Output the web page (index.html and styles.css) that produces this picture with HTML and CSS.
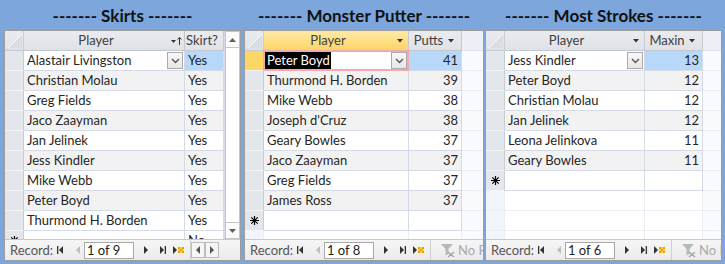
FILE: index.html
```html
<!DOCTYPE html>
<html lang="en">
<head>
    <meta charset="UTF-8">
    <title>Golf Day Stats</title>
    <link rel="stylesheet" href="styles.css">
</head>
<body>

<div class="form">

    <!-- Skirts -->
    <section class="panel skirts">
        <h2 class="title">------- Skirts -------</h2>
        <div class="sheet">
            <div class="sheet-body">
                <div class="rows">
                    <div class="row head">
                        <div class="cell sel corner"><svg width="18" height="19" viewBox="0 0 18 19"><path d="M3 17L17 3V17Z" fill="#dadee4"/><path d="M3 17L17 3" stroke="#f7f8fa" stroke-width="1"/></svg></div>
                        <div class="cell hcell"><span class="htext">Player</span><span class="hicon"><svg width="12" height="10" viewBox="0 0 12 10"><path d="M1 4h5L3.5 7z" fill="#333"/><path d="M9.5 9V1.5M7.5 3.5l2-2 2 2" stroke="#333" fill="none"/></svg></span></div>
                        <div class="cell hcell left"><span>Skirt?</span></div>
                    </div>
                    <div class="row">
                        <div class="cell sel"></div>
                        <div class="cell combo"><span class="name">Alastair Livingston</span><span class="drop"><svg width="9" height="6" viewBox="0 0 9 6"><path d="M1 1l3.5 3.5L8 1" stroke="#555" stroke-width="1.4" fill="none"/></svg></span></div>
                        <div class="cell picked">Yes</div>
                    </div>
                    <div class="row alt"><div class="cell sel"></div><div class="cell">Christian Molau</div><div class="cell">Yes</div></div>
                    <div class="row"><div class="cell sel"></div><div class="cell">Greg Fields</div><div class="cell">Yes</div></div>
                    <div class="row alt"><div class="cell sel"></div><div class="cell">Jaco Zaayman</div><div class="cell">Yes</div></div>
                    <div class="row"><div class="cell sel"></div><div class="cell">Jan Jelinek</div><div class="cell">Yes</div></div>
                    <div class="row alt"><div class="cell sel"></div><div class="cell">Jess Kindler</div><div class="cell">Yes</div></div>
                    <div class="row"><div class="cell sel"></div><div class="cell">Mike Webb</div><div class="cell">Yes</div></div>
                    <div class="row alt"><div class="cell sel"></div><div class="cell">Peter Boyd</div><div class="cell">Yes</div></div>
                    <div class="row"><div class="cell sel"></div><div class="cell">Thurmond H. Borden</div><div class="cell">Yes</div></div>
                    <div class="row"><div class="cell sel star"><svg width="9" height="9" viewBox="0 0 9 9"><path d="M4.5 0v9M0 4.5h9M1.3 1.3l6.4 6.4M7.7 1.3L1.3 7.7" stroke="#000" stroke-width="1.2"/></svg></div><div class="cell"></div><div class="cell">No</div></div>
                </div>
                <div class="vscroll">
                    <div class="sbtn"><svg width="7" height="4" viewBox="0 0 7 4"><path d="M0 4h7L3.5 0z" fill="#606060"/></svg></div>
                    <div class="thumb"></div>
                    <div class="sbtn"><svg width="7" height="4" viewBox="0 0 7 4"><path d="M0 0h7L3.5 4z" fill="#606060"/></svg></div>
                </div>
            </div>
            <div class="nav">
                <span class="nav-label">Record:</span>
                <svg class="nb first" width="6" height="8" viewBox="0 0 6 8"><rect width="1.3" height="8" fill="#333"/><path d="M6 0v8L2 4z" fill="#333"/></svg>
                <svg class="nb prev" width="4" height="8" viewBox="0 0 4 8"><path d="M4 0v8L0 4z" fill="#bdbdbd"/></svg>
                <span class="nav-box">1 of 9</span>
                <svg class="nb next" width="4" height="8" viewBox="0 0 4 8"><path d="M0 0v8l4-4z" fill="#333"/></svg>
                <svg class="nb last" width="6" height="8" viewBox="0 0 6 8"><path d="M0 0v8l4-4z" fill="#333"/><rect x="4.7" width="1.3" height="8" fill="#333"/></svg>
                <svg class="nb new" width="12" height="8" viewBox="0 0 12 8"><path d="M0 0v8l4-4z" fill="#333"/><rect x="5" y="1" width="6" height="6" fill="#f6d24a"/><path d="M5 1h2v2H5zM9 1h2v2H9zM7 3h2v2H7zM5 5h2v2H5zM9 5h2v2H9z" fill="#e2a400"/></svg>
                <span class="nav-sep"></span>
                <span class="hbtn"><svg width="4" height="8" viewBox="0 0 4 8"><path d="M4 0v8L0 4z" fill="#555"/></svg></span>
                <span class="hbtn"><svg width="4" height="8" viewBox="0 0 4 8"><path d="M0 0v8l4-4z" fill="#555"/></svg></span>
            </div>
        </div>
    </section>

    <!-- Monster Putter -->
    <section class="panel putter">
        <h2 class="title">------- Monster Putter -------</h2>
        <div class="sheet">
            <div class="sheet-body">
                <div class="rows">
                    <div class="row head">
                        <div class="cell sel corner"><svg width="18" height="19" viewBox="0 0 18 19"><path d="M3 17L17 3V17Z" fill="#dadee4"/><path d="M3 17L17 3" stroke="#f7f8fa" stroke-width="1"/></svg></div>
                        <div class="cell hcell active"><span class="htext">Player</span><span class="hicon"><svg width="6" height="4" viewBox="0 0 6 4"><path d="M0 0h6L3 3.5z" fill="#333"/></svg></span></div>
                        <div class="cell hcell"><span class="htext">Putts</span><span class="hicon small"><svg width="6" height="4" viewBox="0 0 6 4"><path d="M0 0h6L3 3.5z" fill="#333"/></svg></span></div>
                        <div class="cell fill"></div>
                    </div>
                    <div class="row">
                        <div class="cell sel current"></div>
                        <div class="cell combo focus"><span class="name"><span class="hl">Peter Boyd</span></span><span class="drop"><svg width="9" height="6" viewBox="0 0 9 6"><path d="M1 1l3.5 3.5L8 1" stroke="#555" stroke-width="1.4" fill="none"/></svg></span></div>
                        <div class="cell num picked">41</div>
                        <div class="cell fill"></div>
                    </div>
                    <div class="row alt"><div class="cell sel"></div><div class="cell">Thurmond H. Borden</div><div class="cell num">39</div><div class="cell fill"></div></div>
                    <div class="row"><div class="cell sel"></div><div class="cell">Mike Webb</div><div class="cell num">38</div><div class="cell fill"></div></div>
                    <div class="row alt"><div class="cell sel"></div><div class="cell">Joseph d'Cruz</div><div class="cell num">38</div><div class="cell fill"></div></div>
                    <div class="row"><div class="cell sel"></div><div class="cell">Geary Bowles</div><div class="cell num">37</div><div class="cell fill"></div></div>
                    <div class="row alt"><div class="cell sel"></div><div class="cell">Jaco Zaayman</div><div class="cell num">37</div><div class="cell fill"></div></div>
                    <div class="row"><div class="cell sel"></div><div class="cell">Greg Fields</div><div class="cell num">37</div><div class="cell fill"></div></div>
                    <div class="row alt"><div class="cell sel"></div><div class="cell">James Ross</div><div class="cell num">37</div><div class="cell fill"></div></div>
                    <div class="row"><div class="cell sel star"><svg width="9" height="9" viewBox="0 0 9 9"><path d="M4.5 0v9M0 4.5h9M1.3 1.3l6.4 6.4M7.7 1.3L1.3 7.7" stroke="#000" stroke-width="1.2"/></svg></div><div class="cell"></div><div class="cell"></div><div class="cell fill"></div></div>
                    <div class="row blank"><div class="cell sel"></div><div class="cell"></div><div class="cell"></div><div class="cell fill"></div></div>
                </div>
            </div>
            <div class="nav">
                <span class="nav-label">Record:</span>
                <svg class="nb first" width="6" height="8" viewBox="0 0 6 8"><rect width="1.3" height="8" fill="#333"/><path d="M6 0v8L2 4z" fill="#333"/></svg>
                <svg class="nb prev" width="4" height="8" viewBox="0 0 4 8"><path d="M4 0v8L0 4z" fill="#bdbdbd"/></svg>
                <span class="nav-box">1 of 8</span>
                <svg class="nb next" width="4" height="8" viewBox="0 0 4 8"><path d="M0 0v8l4-4z" fill="#333"/></svg>
                <svg class="nb last" width="6" height="8" viewBox="0 0 6 8"><path d="M0 0v8l4-4z" fill="#333"/><rect x="4.7" width="1.3" height="8" fill="#333"/></svg>
                <svg class="nb new" width="12" height="8" viewBox="0 0 12 8"><path d="M0 0v8l4-4z" fill="#333"/><rect x="5" y="1" width="6" height="6" fill="#f6d24a"/><path d="M5 1h2v2H5zM9 1h2v2H9zM7 3h2v2H7zM5 5h2v2H5zM9 5h2v2H9z" fill="#e2a400"/></svg>
                <span class="nav-sep"></span>
                <svg class="filter" width="16" height="16" viewBox="0 0 16 16"><path d="M1 2h12L8.5 7v5l-3 1.5V7z" fill="#b9b9b9"/><path d="M8 10l6 5M14 10l-6 5" stroke="#a3a3a3" stroke-width="1.3"/></svg>
                <span class="no-filter">No Filter</span>
            </div>
        </div>
    </section>

    <!-- Most Strokes -->
    <section class="panel strokes">
        <h2 class="title">------- Most Strokes -------</h2>
        <div class="sheet">
            <div class="sheet-body">
                <div class="rows">
                    <div class="row head">
                        <div class="cell sel corner"><svg width="18" height="19" viewBox="0 0 18 19"><path d="M3 17L17 3V17Z" fill="#dadee4"/><path d="M3 17L17 3" stroke="#f7f8fa" stroke-width="1"/></svg></div>
                        <div class="cell hcell"><span class="htext">Player</span><span class="hicon"><svg width="6" height="4" viewBox="0 0 6 4"><path d="M0 0h6L3 3.5z" fill="#333"/></svg></span></div>
                        <div class="cell hcell"><span class="htext">Maxin</span><span class="hicon small"><svg width="6" height="4" viewBox="0 0 6 4"><path d="M0 0h6L3 3.5z" fill="#333"/></svg></span></div>
                        <div class="cell fill"></div>
                    </div>
                    <div class="row">
                        <div class="cell sel"></div>
                        <div class="cell combo"><span class="name">Jess Kindler</span><span class="drop"><svg width="9" height="6" viewBox="0 0 9 6"><path d="M1 1l3.5 3.5L8 1" stroke="#555" stroke-width="1.4" fill="none"/></svg></span></div>
                        <div class="cell num picked">13</div>
                        <div class="cell fill"></div>
                    </div>
                    <div class="row alt"><div class="cell sel"></div><div class="cell">Peter Boyd</div><div class="cell num">12</div><div class="cell fill"></div></div>
                    <div class="row"><div class="cell sel"></div><div class="cell">Christian Molau</div><div class="cell num">12</div><div class="cell fill"></div></div>
                    <div class="row alt"><div class="cell sel"></div><div class="cell">Jan Jelinek</div><div class="cell num">12</div><div class="cell fill"></div></div>
                    <div class="row"><div class="cell sel"></div><div class="cell">Leona Jelinkova</div><div class="cell num">11</div><div class="cell fill"></div></div>
                    <div class="row alt"><div class="cell sel"></div><div class="cell">Geary Bowles</div><div class="cell num">11</div><div class="cell fill"></div></div>
                    <div class="row"><div class="cell sel star"><svg width="9" height="9" viewBox="0 0 9 9"><path d="M4.5 0v9M0 4.5h9M1.3 1.3l6.4 6.4M7.7 1.3L1.3 7.7" stroke="#000" stroke-width="1.2"/></svg></div><div class="cell"></div><div class="cell"></div><div class="cell fill"></div></div>
                    <div class="row blank"><div class="cell sel"></div><div class="cell"></div><div class="cell"></div><div class="cell fill"></div></div>
                    <div class="row blank"><div class="cell sel"></div><div class="cell"></div><div class="cell"></div><div class="cell fill"></div></div>
                    <div class="row blank"><div class="cell sel"></div><div class="cell"></div><div class="cell"></div><div class="cell fill"></div></div>
                </div>
            </div>
            <div class="nav">
                <span class="nav-label">Record:</span>
                <svg class="nb first" width="6" height="8" viewBox="0 0 6 8"><rect width="1.3" height="8" fill="#333"/><path d="M6 0v8L2 4z" fill="#333"/></svg>
                <svg class="nb prev" width="4" height="8" viewBox="0 0 4 8"><path d="M4 0v8L0 4z" fill="#bdbdbd"/></svg>
                <span class="nav-box">1 of 6</span>
                <svg class="nb next" width="4" height="8" viewBox="0 0 4 8"><path d="M0 0v8l4-4z" fill="#333"/></svg>
                <svg class="nb last" width="6" height="8" viewBox="0 0 6 8"><path d="M0 0v8l4-4z" fill="#333"/><rect x="4.7" width="1.3" height="8" fill="#333"/></svg>
                <svg class="nb new" width="12" height="8" viewBox="0 0 12 8"><path d="M0 0v8l4-4z" fill="#333"/><rect x="5" y="1" width="6" height="6" fill="#f6d24a"/><path d="M5 1h2v2H5zM9 1h2v2H9zM7 3h2v2H7zM5 5h2v2H5zM9 5h2v2H9z" fill="#e2a400"/></svg>
                <span class="nav-sep"></span>
                <svg class="filter" width="16" height="16" viewBox="0 0 16 16"><path d="M1 2h12L8.5 7v5l-3 1.5V7z" fill="#b9b9b9"/><path d="M8 10l6 5M14 10l-6 5" stroke="#a3a3a3" stroke-width="1.3"/></svg>
                <span class="no-filter">No Filter</span>
            </div>
        </div>
    </section>

</div>

</body>
</html>
```

FILE: styles.css
```css
body {
    margin: 0;
    background-color: #7ca6dc;
    font-family: Lato, "Open Sans", sans-serif;
    color: #262626;
}
.form {
    display: flex;
    padding-left: 4px;
    height: 264px;
}
.panel {
    display: flex;
    flex-direction: column;
}
.skirts {
    width: 237px;
}
.putter {
    width: 240px;
    margin-left: 3px;
}
.strokes {
    width: 237px;
    margin-left: 1px;
}
.title {
    height: 30px;
    margin: 0;
    font-size: 17px;
    font-weight: bold;
    line-height: 31px;
    text-align: center;
    color: #111;
    white-space: nowrap;
}
.sheet {
    height: 231px;
    box-sizing: border-box;
    border: 1px solid #9c9c9c;
    background: #fff;
    display: flex;
    flex-direction: column;
}
.sheet-body {
    flex: 1;
    display: flex;
    overflow: hidden;
}
.rows {
    flex: 1;
    overflow: hidden;
}

/* datasheet rows */
.row {
    display: grid;
    height: 20px;
    font-size: 13px;
}
.skirts .row {
    grid-template-columns: 19px 161px 39px;
}
.putter .row {
    grid-template-columns: 19px 145px 53px 1fr;
}
.strokes .row {
    grid-template-columns: 19px 140px 58px 1fr;
}
.row.alt .cell {
    background: #f2f2f2;
}
.cell {
    box-sizing: border-box;
    border-right: 1px solid #d5dbe6;
    border-bottom: 1px solid #d5dbe6;
    padding: 0 3px;
    line-height: 19px;
    white-space: nowrap;
    overflow: hidden;
    background: #fff;
}
.row .cell.sel {
    background: #e3e6eb;
    border-right-color: #c8ced8;
    border-bottom-color: #f4f5f7;
    padding: 0;
}
.row .cell.sel.current {
    background: #fcd765;
}
.sel.star {
    display: flex;
    align-items: center;
    justify-content: center;
}
.num {
    text-align: right;
}
.row .cell.picked {
    background: #b7d8f8;
}
.row .cell.fill {
    background: #fafbfe;
    border-right: none;
    border-bottom-color: #eceef4;
}
.row.blank .cell {
    border-bottom-color: #eceef4;
    border-right-color: #eceef4;
}
.row.blank .cell.sel {
    background: #f3f5fc;
}

/* header */
.head .cell {
    background: linear-gradient(#e9ebef, #dfe2e7);
    border-right-color: #c4c8cf;
    border-bottom-color: #c4c8cf;
    color: #404040;
}
.head .cell.sel {
    background: linear-gradient(#e9ebef, #dfe2e7);
    border-bottom-color: #c4c8cf;
}
.head .cell.fill {
    background: #eef0f7;
    border-bottom-color: #dfe2ea;
}
.head .cell.active {
    background: linear-gradient(#feeaa6, #fcd566);
}
.hcell {
    display: flex;
    align-items: center;
    padding: 0;
}
.hcell.left {
    padding-left: 1px;
}
.htext {
    flex: 1;
    text-align: center;
}
.hicon {
    width: 16px;
    display: flex;
    align-items: center;
    justify-content: center;
}
.hicon.small {
    width: 13px;
    justify-content: flex-start;
}
.corner svg {
    display: block;
}

/* current combo cell */
.combo {
    display: flex;
    align-items: center;
    padding-right: 1px;
}
.combo .name {
    flex: 1;
    overflow: hidden;
}
.drop {
    width: 14px;
    height: 15px;
    border: 1px solid #ababab;
    background: linear-gradient(#f8f8f8, #e6e6e6);
    display: flex;
    align-items: center;
    justify-content: center;
}
.focus {
    position: relative;
    overflow: visible;
    padding-left: 0;
}
.focus::after {
    content: "";
    position: absolute;
    top: -1px;
    left: -1px;
    right: -1px;
    bottom: -1px;
    border: 2px solid #f2aab1;
    pointer-events: none;
}
.hl {
    background: #000;
    color: #fff;
    padding: 2px 1px 2px 3px;
}

/* vertical scroll bar */
.vscroll {
    width: 16px;
    display: flex;
    flex-direction: column;
    background: #f0f0f0;
    border-left: 1px solid #d5dbe6;
    box-sizing: border-box;
}
.sbtn {
    height: 17px;
    box-sizing: border-box;
    border: 1px solid #c6c6c6;
    background: #fbfbfb;
    display: flex;
    align-items: center;
    justify-content: center;
}
.thumb {
    flex: 1;
    background: #fff;
    border-left: 1px solid #c6c6c6;
    border-right: 1px solid #c6c6c6;
}

/* record navigator */
.nav {
    height: 21px;
    box-sizing: border-box;
    border-top: 1px solid #c9c9c9;
    background: linear-gradient(#f6f6f6, #ebebeb);
    display: flex;
    align-items: center;
    padding-left: 5px;
    font-size: 13px;
    color: #555;
    overflow: hidden;
    white-space: nowrap;
}
.nav-label {
    width: 47px;
    flex-shrink: 0;
}
.nb {
    flex-shrink: 0;
}
.nb.prev {
    margin-left: 13px;
}
.nav-box {
    width: 50px;
    height: 17px;
    box-sizing: border-box;
    margin-left: 4px;
    border: 1px solid #a8a8a8;
    background: #fff;
    color: #222;
    line-height: 15px;
    padding-left: 2px;
    flex-shrink: 0;
}
.nb.next {
    margin-left: 10px;
}
.nb.last {
    margin-left: 12px;
}
.nb.new {
    margin-left: 7px;
}
.nav-sep {
    width: 1px;
    height: 20px;
    margin-left: 5px;
    background: #cfcfcf;
    flex-shrink: 0;
}
.hbtn {
    width: 14px;
    height: 16px;
    box-sizing: border-box;
    border: 1px solid #bdbdbd;
    background: #f5f5f5;
    display: flex;
    align-items: center;
    justify-content: center;
    flex-shrink: 0;
}
.filter {
    margin-left: 9px;
    flex-shrink: 0;
}
.no-filter {
    flex: 0 1 auto;
    min-width: 0;
    overflow: hidden;
    margin-left: 2px;
    color: #a9a9a9;
}
```
